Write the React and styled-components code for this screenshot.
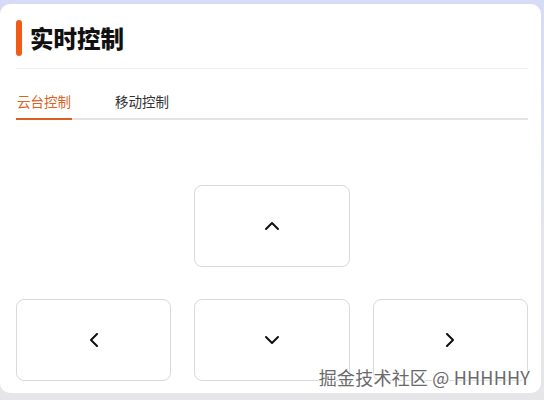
import React, { useState } from "react";
import styled, { createGlobalStyle } from "styled-components";

const Global = createGlobalStyle`
  html, body {
    margin: 0;
    height: 100%;
  }
  body {
    background: linear-gradient(180deg, #d6dbf6 0%, #e4e5ef 60%, #e6e6e8 100%);
    font-family: "Noto Sans CJK SC", "Noto Sans", sans-serif;
  }
  #root {
    padding: 4px 3px 7px 0;
  }
`;

const Card = styled.div`
  position: relative;
  background: #fff;
  border-radius: 10px;
  height: 389px;
  box-sizing: border-box;
  padding: 16px 13px 16px 16px;
`;

const Header = styled.div`
  display: flex;
  align-items: center;
  gap: 8px;
  height: 36px;
  padding-bottom: 12px;
  border-bottom: 1px solid #efefef;
`;

const Bar = styled.span`
  width: 6px;
  height: 36px;
  border-radius: 3px;
  background: #f25a17;
`;

const Title = styled.h2`
  margin: 0;
  font-size: 23.5px;
  font-weight: 900;
  color: #111;
`;

const Tabs = styled.div`
  display: flex;
  gap: 42px;
  margin-top: 22px;
  border-bottom: 2px solid #e4e4e4;
`;

const Tab = styled.div`
  font-size: 13.5px;
  line-height: 20px;
  padding: 0 1px 7px;
  margin-bottom: -2px;
  color: ${(p) => (p.$active ? "#e0601e" : "#333")};
  border-bottom: 2px solid ${(p) => (p.$active ? "#d9601f" : "transparent")};
  cursor: pointer;
`;

const Pad = styled.div`
  display: grid;
  grid-template-columns: repeat(3, 1fr);
  grid-template-rows: 82px 82px;
  column-gap: 23px;
  row-gap: 32px;
  margin-top: 65px;
`;

const Key = styled.button`
  grid-column: ${(p) => p.$col};
  grid-row: ${(p) => p.$row};
  display: flex;
  align-items: center;
  justify-content: center;
  background: #fff;
  border: 1px solid #d9d9d9;
  border-radius: 8px;
  padding: 0;
  cursor: pointer;
`;

const Watermark = styled.div`
  position: absolute;
  right: 11px;
  bottom: 3px;
  font-size: 18px;
  letter-spacing: 0.2px;
  color: #6a6a6a;
  text-shadow: -1px 0 #fff, 1px 0 #fff, 0 -1px #fff, 0 1px #fff;
`;

const arrows = {
  up: "M1 8 L7 2 L13 8",
  down: "M1 2 L7 8 L13 2",
  left: "M8 1 L2 7 L8 13",
  right: "M2 1 L8 7 L2 13",
};

const Chevron = ({ dir }) => {
  const wide = dir === "up" || dir === "down";
  return (
    <svg width={wide ? 14 : 10} height={wide ? 10 : 14} viewBox={wide ? "0 0 14 10" : "0 0 10 14"}>
      <path d={arrows[dir]} fill="none" stroke="#111" strokeWidth="2" strokeLinecap="round" strokeLinejoin="round" />
    </svg>
  );
};

export default function App() {
  const [tab, setTab] = useState(0);
  return (
    <>
      <Global />
      <Card>
        <Header>
          <Bar />
          <Title>实时控制</Title>
        </Header>
        <Tabs>
          {["云台控制", "移动控制"].map((t, i) => (
            <Tab key={t} $active={tab === i} onClick={() => setTab(i)}>
              {t}
            </Tab>
          ))}
        </Tabs>
        <Pad>
          <Key $col={2} $row={1}><Chevron dir="up" /></Key>
          <Key $col={1} $row={2}><Chevron dir="left" /></Key>
          <Key $col={2} $row={2}><Chevron dir="down" /></Key>
          <Key $col={3} $row={2}><Chevron dir="right" /></Key>
        </Pad>
        <Watermark>掘金技术社区 @ HHHHHY</Watermark>
      </Card>
    </>
  );
}
